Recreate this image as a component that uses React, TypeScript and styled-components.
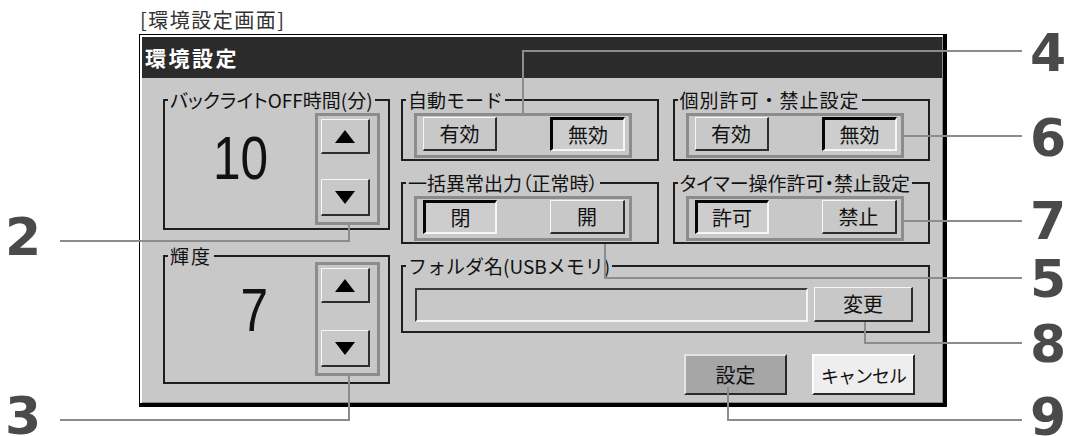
import React from 'react';
import styled, { createGlobalStyle } from 'styled-components';

const GlobalStyle = createGlobalStyle`
  html, body {
    margin: 0;
    padding: 0;
    background: #fff;
  }
  body {
    font-family: "Noto Sans CJK JP", "Noto Sans", sans-serif;
    color: #111;
  }
`;

const Page = styled.div`
  position: relative;
  width: 1073px;
  height: 436px;
  overflow: hidden;
  box-sizing: border-box;
  padding: 5px 0 0 139px;
`;

const Caption = styled.div`
  height: 29px;
  font-size: 20px;
  line-height: 29px;
  letter-spacing: 1.5px;
  color: #333;
  margin-left: 1px;
`;

const Window = styled.div`
  width: 808px;
  box-sizing: border-box;
  border-style: solid;
  border-color: #000;
  border-width: 1px 4px 4px 1px;
  padding: 2px 1px 1px 2px;
  background: #c8c8c8;
  box-shadow: inset 2px 2px #fff, inset -1px -1px #8a8a8a;
`;

const TitleBar = styled.div`
  height: 41px;
  background: #2b2b2b;
  color: #fff;
  font-weight: 700;
  font-size: 21px;
  line-height: 41px;
  padding-left: 3px;
  letter-spacing: 2.5px;
`;

const Body = styled.div`
  display: grid;
  grid-template-columns: 227px 1fr;
  column-gap: 11px;
  padding: 13px 12px 7px 21px;
`;

const Column = styled.div<{ $gap: number }>`
  display: flex;
  flex-direction: column;
  gap: ${(p) => p.$gap}px;
  min-width: 0;
`;

const PairRow = styled.div`
  display: grid;
  grid-template-columns: 1fr 1fr;
  column-gap: 14px;
`;

const GroupBox = styled.fieldset`
  margin: 0;
  padding: 0;
  min-width: 0;
  border: 2px solid #1e1e1e;
`;

const Legend = styled.legend<{ $palt?: boolean; $track?: number }>`
  font-size: 19px;
  line-height: 18px;
  padding: 0 2px;
  margin-left: 3px;
  color: #111;
  white-space: nowrap;
  letter-spacing: ${(p) => p.$track ?? 0}px;
  font-feature-settings: ${(p) => (p.$palt ? '"palt"' : 'normal')};
`;

const GroupBody = styled.div<{ $pad: string; $lift?: number }>`
  display: flex;
  align-items: flex-start;
  padding: ${(p) => p.$pad};
  margin-top: ${(p) => -(p.$lift ?? 0)}px;
`;

const ValueArea = styled.div<{ $pad: string }>`
  flex: 1;
  display: flex;
  justify-content: center;
  padding: ${(p) => p.$pad};
  font-family: "Liberation Sans", Arial, sans-serif;
  font-size: 62px;
  line-height: 62px;
  color: #111;
  span {
    display: inline-block;
    transform: scaleX(0.8);
  }
`;

const SpinBox = styled.div<{ $h: number }>`
  box-sizing: border-box;
  width: 65px;
  height: ${(p) => p.$h}px;
  border: 3px solid #8c8c8c;
  padding: 3px 7px 6px 3px;
  display: flex;
  flex-direction: column;
  justify-content: space-between;
`;

const Outline = styled.div`
  box-sizing: border-box;
  width: 218px;
  height: 45px;
  margin-left: 11px;
  border: 3px solid #8c8c8c;
  padding: 1px 4px 0 6px;
  display: flex;
  justify-content: space-between;
  align-items: flex-start;
`;

type Variant = 'raised' | 'pressed' | 'dark' | 'light';

const bevels: Record<Variant, string> = {
  raised: `
    background: #c8c8c8;
    border-width: 1px 2px 2px 1px;
    border-color: #f6f6f6 #2e2e2e #2e2e2e #f6f6f6;
  `,
  pressed: `
    background: #cdcdcd;
    border-width: 3px 2px 2px 3px;
    border-color: #050505 #f6f6f6 #f6f6f6 #050505;
  `,
  dark: `
    background: #a6a6a6;
    border-width: 2px;
    border-color: #e4e4e4 #2a2a2a #2a2a2a #e4e4e4;
  `,
  light: `
    background: #eeeeee;
    border-width: 2px;
    border-color: #ffffff #2a2a2a #2a2a2a #ffffff;
  `,
};

const Button = styled.button<{ $variant?: Variant; $w: number; $h: number; $tight?: boolean }>`
  box-sizing: border-box;
  width: ${(p) => p.$w}px;
  height: ${(p) => p.$h}px;
  flex: none;
  padding: 0;
  border-style: solid;
  font-family: "Noto Sans CJK JP", sans-serif;
  font-size: ${(p) => (p.$tight ? 18 : 20)}px;
  letter-spacing: ${(p) => (p.$tight ? -1 : 0)}px;
  white-space: nowrap;
  line-height: 1;
  color: #111;
  display: flex;
  align-items: center;
  justify-content: center;
  ${(p) => bevels[p.$variant ?? 'raised']}
`;

const TextField = styled.div`
  box-sizing: border-box;
  width: 393px;
  height: 34px;
  margin-left: 12px;
  margin-right: 6px;
  background: #c8c8c8;
  border-style: solid;
  border-width: 2px;
  border-color: #3a3a3a #f4f4f4 #f4f4f4 #3a3a3a;
`;

const FolderRow = styled.div`
  display: flex;
  align-items: flex-end;
  padding: 12px 0 9px 0;
`;

const ActionRow = styled.div`
  display: flex;
  justify-content: flex-end;
  gap: 25px;
  padding-right: 15px;
  margin-top: 8px;
`;

const Leaders = styled.svg`
  position: absolute;
  left: 0;
  top: 0;
  pointer-events: none;
`;

const Callout = styled.span<{ $x: number; $y: number }>`
  position: absolute;
  left: ${(p) => p.$x}px;
  top: ${(p) => p.$y}px;
  font-family: "DejaVu Sans", sans-serif;
  font-weight: 700;
  font-size: 52px;
  line-height: 52px;
  color: #4a4a4a;
`;

const Triangle: React.FC<{ down?: boolean }> = ({ down }) => (
  <svg width="20" height="13" viewBox="0 0 20 13">
    <polygon points={down ? '0,0 20,0 10,13' : '10,0 20,13 0,13'} fill="#000" />
  </svg>
);

const Spinner: React.FC<{ h: number }> = ({ h }) => (
  <SpinBox $h={h}>
    <Button $w={49} $h={35}>
      <Triangle />
    </Button>
    <Button $w={49} $h={37}>
      <Triangle down />
    </Button>
  </SpinBox>
);

const Toggle: React.FC<{ left: string; right: string; active: 'left' | 'right' }> = ({
  left,
  right,
  active,
}) => (
  <Outline>
    <Button $w={74} $h={34} $variant={active === 'left' ? 'pressed' : 'raised'}>
      {left}
    </Button>
    <Button $w={75} $h={34} $variant={active === 'right' ? 'pressed' : 'raised'}>
      {right}
    </Button>
  </Outline>
);

const leaders = [
  '523,113 523,51 1022,51',
  '901,136 1022,136',
  '902,221 1022,221',
  '605,244 605,278 1022,278',
  '865,322 865,343 1022,343',
  '728,387 728,420 1022,420',
  '349,225 349,241 60,241',
  '349,376 349,420 60,420',
];

const callouts = [
  { n: '4', x: 1030, y: 27 },
  { n: '6', x: 1030, y: 112 },
  { n: '7', x: 1030, y: 195 },
  { n: '5', x: 1030, y: 253 },
  { n: '8', x: 1030, y: 318 },
  { n: '9', x: 1030, y: 391 },
  { n: '2', x: 5, y: 211 },
  { n: '3', x: 5, y: 390 },
];

const App: React.FC = () => {
  return (
    <Page>
      <GlobalStyle />
      <Caption>[環境設定画面]</Caption>
      <Window>
        <TitleBar>環境設定</TitleBar>
        <Body>
          <Column $gap={17}>
            <GroupBox>
              <Legend $palt>バックライトOFF時間(分)</Legend>
              <GroupBody $pad="4px 8px 3px 0">
                <ValueArea $pad="14px 0 0 0">
                  <span>10</span>
                </ValueArea>
                <Spinner h={112} />
              </GroupBody>
            </GroupBox>
            <GroupBox>
              <Legend $track={2}>輝度</Legend>
              <GroupBody $pad="0 8px 6px 0" $lift={3}>
                <ValueArea $pad="17px 0 0 28px">
                  <span>7</span>
                </ValueArea>
                <Spinner h={114} />
              </GroupBody>
            </GroupBox>
          </Column>

          <Column $gap={13}>
            <PairRow>
              <GroupBox>
                <Legend>自動モード</Legend>
                <GroupBody $pad="4px 0 1px 0">
                  <Toggle left="有効" right="無効" active="right" />
                </GroupBody>
              </GroupBox>
              <GroupBox>
                <Legend $track={1}>個別許可・禁止設定</Legend>
                <GroupBody $pad="4px 0 1px 0">
                  <Toggle left="有効" right="無効" active="right" />
                </GroupBody>
              </GroupBox>
            </PairRow>
            <PairRow>
              <GroupBox>
                <Legend $palt>一括異常出力（正常時）</Legend>
                <GroupBody $pad="4px 0 1px 0">
                  <Toggle left="閉" right="開" active="left" />
                </GroupBody>
              </GroupBox>
              <GroupBox>
                <Legend $palt>タイマー操作許可・禁止設定</Legend>
                <GroupBody $pad="4px 0 1px 0">
                  <Toggle left="許可" right="禁止" active="left" />
                </GroupBody>
              </GroupBox>
            </PairRow>
            <GroupBox>
              <Legend>フォルダ名(USBメモリ)</Legend>
              <FolderRow>
                <TextField />
                <Button $w={99} $h={35}>
                  変更
                </Button>
              </FolderRow>
            </GroupBox>
            <ActionRow>
              <Button $w={103} $h={41} $variant="dark">
                設定
              </Button>
              <Button $w={103} $h={41} $variant="light" $tight>
                キャンセル
              </Button>
            </ActionRow>
          </Column>
        </Body>
      </Window>

      <Leaders width="1073" height="436" viewBox="0 0 1073 436">
        {leaders.map((pts) => (
          <polyline key={pts} points={pts} fill="none" stroke="#8c8c8c" strokeWidth={2} />
        ))}
      </Leaders>
      {callouts.map((c) => (
        <Callout key={c.n} $x={c.x} $y={c.y}>
          {c.n}
        </Callout>
      ))}
    </Page>
  );
};

export default App;
